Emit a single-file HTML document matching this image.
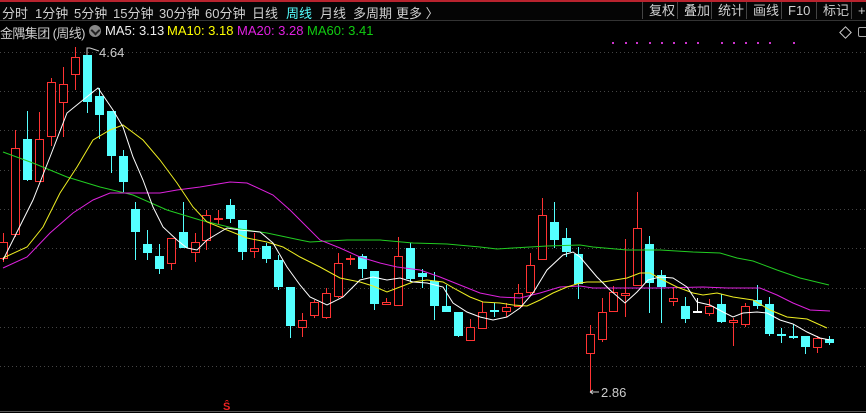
<!DOCTYPE html>
<html><head><meta charset="utf-8"><style>
body{margin:0;background:#000;width:866px;height:413px;overflow:hidden;position:relative;font-family:"Liberation Sans","Noto Sans CJK SC",sans-serif}
.bar{position:absolute;left:0;top:0;width:866px;height:21px;background:#050505;border-top:2px solid #b8232e;box-sizing:border-box;border-bottom:1px solid #333}
.t{position:absolute;top:3px;font-size:13px;color:#d0d0d0;white-space:nowrap}
.btn{position:absolute;top:2px;height:17px;border-left:1px solid #444;font-size:13px;color:#d0d0d0;padding-left:6px;line-height:17px}
.r2{position:absolute;top:23px;font-size:13px;white-space:nowrap}
</style></head><body>
<div class="bar"></div>
<div class="t" style="left:2px">分时</div>
<div class="t" style="left:35px">1分钟</div>
<div class="t" style="left:74px">5分钟</div>
<div class="t" style="left:113px">15分钟</div>
<div class="t" style="left:159px">30分钟</div>
<div class="t" style="left:205px">60分钟</div>
<div class="t" style="left:252px">日线</div>
<div class="t" style="left:286px;color:#5ff">周线</div>
<div class="t" style="left:320px">月线</div>
<div class="t" style="left:353px">多周期</div>
<div class="t" style="left:396px">更多 〉</div>
<div class="btn" style="left:642px;width:30px">复权</div>
<div class="btn" style="left:677px;width:30px">叠加</div>
<div class="btn" style="left:711px;width:30px">统计</div>
<div class="btn" style="left:746px;width:29px">画线</div>
<div class="btn" style="left:781px;width:24px">F10</div>
<div class="btn" style="left:816px;width:30px">标记</div>
<div class="btn" style="left:851px;width:20px">+</div>
<div class="r2" style="left:0;color:#ccc;letter-spacing:-0.6px">金隅集团 (周线)</div>
<div style="position:absolute;left:89px;top:25px;width:12px;height:12px;border-radius:50%;background:#888"></div>
<div style="position:absolute;left:92px;top:27px;width:5px;height:5px;border-right:2px solid #222;border-bottom:2px solid #222;transform:rotate(45deg)"></div>
<div class="r2" style="left:105px;color:#eee">MA5: 3.13</div>
<div class="r2" style="left:167px;color:#ff0">MA10: 3.18</div>
<div class="r2" style="left:237px;color:#e020e0">MA20: 3.28</div>
<div class="r2" style="left:307px;color:#1c1">MA60: 3.41</div>
<div style="position:absolute;left:841px;top:28px;width:7px;height:7px;border:1px solid #ccc;transform:rotate(45deg)"></div>
<div style="position:absolute;left:858px;top:27px;width:10px;height:8px;border:1px solid #aaa;border-radius:2px"></div>
<svg id="s" width="866" height="413" style="position:absolute;left:0;top:0" xmlns="http://www.w3.org/2000/svg">
<text x="99" y="57" fill="#ccc" font-size="13" font-family="Liberation Sans">4.64</text>
<path d="M87 55 V48 H90 M90 48 L99 51" stroke="#ccc" fill="none"/>
<text x="601" y="397" fill="#ccc" font-size="13" font-family="Liberation Sans">2.86</text>
<path d="M590 392 H599 M590 392 l3 -2 M590 392 l3 2" stroke="#ccc" fill="none"/>
<text x="223" y="410" fill="#e22" font-size="11" font-weight="bold" font-family="Liberation Sans">Ŝ</text>
<line x1="0" y1="411.5" x2="866" y2="411.5" stroke="#555"/>
</svg>
<script>
var s=document.getElementById('s');
var h='';
[52,91,130,170,209,248,288,327,366].forEach(function(y){h+='<line x1="0" y1="'+(y+.5)+'" x2="866" y2="'+(y+.5)+'" stroke="#444" stroke-dasharray="1,3"/>';});
[612,625,636,649,661,673,685,697,721,733,745,757,769,793].forEach(function(x){h+='<rect x="'+x+'" y="42" width="2" height="2" fill="#c3c"/>';});
var C=[['r',242,258,233,262],['r',148,234,130,237],['c',139,180,111,181],['r',139,181,112,181],['r',82,136,78,146],['r',84,102,67,137],['r',57,74,47,90],['c',55,102,55,113],['c',96,115,88,139],['c',111,156,111,173],['c',156,182,150,192],['c',209,232,202,260],['c',244,253,230,260],['c',256,269,244,274],['r',238,263,238,270],['c',232,248,202,248],['r',242,252,233,262],['r',215,240,210,250],['r',218,219,210,225],['c',205,219,199,223],['c',220,252,220,260],['r',248,251,233,258],['c',246,259,243,263],['c',260,287,255,290],['c',287,326,287,338],['r',320,327,313,337],['r',302,315,300,318],['r',293,317,288,319],['r',263,296,253,298],['r',258,259,255,265],['c',256,269,254,278],['c',271,304,271,310],['r',302,304,298,305],['r',256,305,237,305],['c',248,279,243,282],['c',273,277,269,288],['c',281,306,272,320],['c',306,312,285,312],['c',312,336,312,337],['r',327,340,319,341],['r',312,328,302,328],['c',310,312,303,317],['r',307,311,303,317],['r',293,306,284,307],['r',265,292,253,296],['r',215,259,198,259],['c',222,240,202,248],['c',238,252,228,257],['c',254,284,247,299],['r',334,353,325,392],['r',312,339,298,342],['r',292,311,286,312],['r',293,295,239,317],['r',228,285,192,285],['c',244,283,236,313],['c',275,287,270,323],['r',298,301,287,306],['c',306,319,297,323],['w',311,312,298,313],['r',306,313,299,316],['c',304,322,294,323],['r',320,322,318,346],['r',306,324,303,327],['c',300,306,285,309],['c',304,334,297,336],['c',334,335,328,343],['c',336,337,324,339],['c',336,347,336,354],['r',338,347,336,353],['c',339,343,336,345]];
C.forEach(function(c,i){var x=Math.round(3+11.97*i),t=c[1],b=c[2];
 if(c[0]=='r'){h+='<line x1="'+(x+.5)+'" y1="'+c[3]+'" x2="'+(x+.5)+'" y2="'+t+'" stroke="#f33"/><line x1="'+(x+.5)+'" y1="'+b+'" x2="'+(x+.5)+'" y2="'+c[4]+'" stroke="#f33"/><rect x="'+(x-3.5)+'" y="'+(t+.5)+'" width="8" height="'+Math.max(1,b-t)+'" fill="#000" stroke="#f33"/>';}
 else{var col=c[0]=='c'?'#54ffff':'#fff';h+='<line x1="'+(x+.5)+'" y1="'+c[3]+'" x2="'+(x+.5)+'" y2="'+c[4]+'" stroke="'+col+'"/><rect x="'+(x-4)+'" y="'+t+'" width="9" height="'+Math.max(2,b-t)+'" fill="'+col+'"/>';}});
function P(a,col){h+='<polyline points="'+a+'" fill="none" stroke="'+col+'" stroke-width="1"/>';}
P('3,152 33,163 67,177 100,187 133,195 167,210 200,220 233,228 267,233 300,240 310,242 347,240 380,240 413,243 447,244 480,247 497,249 513,248 547,246 580,245 593,247 627,250 660,250 693,252 720,253 737,258 753,261 777,270 800,278 829,285','#2c2');
P('3,268 27,257 50,233 73,213 93,200 110,193 133,193 160,193 177,190 200,187 230,182 247,183 273,195 290,210 300,220 320,240 340,248 360,257 380,263 397,267 420,270 440,277 460,285 480,293 500,297 520,298 540,293 560,287 580,286 593,288 627,288 660,288 703,287 727,288 760,288 777,295 793,303 810,310 830,311','#d2d');
P('3,258 27,247 43,227 60,193 77,167 93,140 110,130 123,125 143,140 160,160 177,183 193,207 207,222 227,230 247,238 267,242 283,247 300,257 320,267 340,278 360,282 373,286 387,292 400,287 413,282 427,280 443,282 457,290 470,297 483,302 500,303 513,305 527,306 540,300 553,293 567,287 580,283 587,282 603,282 627,278 640,273 650,273 663,280 677,287 693,293 703,295 717,293 733,297 753,300 770,310 787,317 807,319 827,328','#ee2');
P('3,260 33,200 50,157 67,113 83,100 98,88 113,110 123,127 133,157 143,180 153,207 163,227 177,240 187,248 197,250 207,240 227,228 240,230 260,232 273,243 287,267 300,285 310,297 327,305 343,297 360,280 373,277 387,280 400,278 413,282 427,283 443,287 453,303 467,312 480,317 493,320 507,317 520,308 533,293 547,270 563,255 573,252 580,257 597,277 610,290 625,303 637,292 648,280 660,277 673,278 687,287 697,302 710,305 723,312 733,317 743,313 757,312 767,313 780,320 793,324 807,332 820,338 830,340','#fff');
s.insertAdjacentHTML('afterbegin',h);
</script>
</body></html>
